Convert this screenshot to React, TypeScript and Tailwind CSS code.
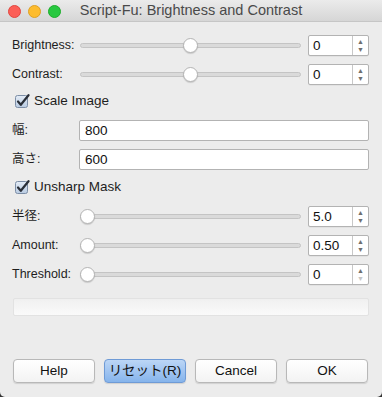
import type {ReactNode} from "react";

const font = {fontFamily: '"Liberation Sans", "Noto Sans CJK JP", Arial, sans-serif'};

function Slider({pos}: {pos: string}) {
  return (
    <div className="relative flex-1 h-[16px] flex items-center">
      <div className="w-full h-[5px] rounded-full bg-[#dadada] border border-[#c4c4c4]"/>
      <div className={`absolute top-[0.5px] ${pos} w-[15px] h-[15px] rounded-full bg-white border border-[#b4b4b4] shadow-[0_1px_1px_rgba(0,0,0,0.15)]`}/>
    </div>
  );
}

function Spin({value, downOff}: {value: string; downOff?: boolean}) {
  return (
    <div className="ml-[7px] w-[61px] h-[21px] flex bg-white border border-[#b3b3b3] rounded-[2px] shadow-[0_0.5px_0_rgba(0,0,0,0.08)]">
      <div className="flex-1 pl-[4px] text-[13.5px] leading-[19px] text-[#111]">{value}</div>
      <div className="w-[16px] border-l border-[#c8c8c8] flex flex-col items-center justify-center text-[7px] leading-[8px]">
        <span className="text-[#6e6e6e]">▲</span>
        <span className={downOff ? "text-[#c4c4c4]" : "text-[#6e6e6e]"}>▼</span>
      </div>
    </div>
  );
}

function SliderRow({label, pos, value, downOff, className}: {label: string; pos: string; value: string; downOff?: boolean; className: string}) {
  return (
    <div className={`flex items-center h-[21px] ${className}`}>
      <div className="w-[68px] text-[12.5px] text-[#1e1e1e]">{label}</div>
      <Slider pos={pos}/>
      <Spin value={value} downOff={downOff}/>
    </div>
  );
}

function Check({label, className}: {label: string; className: string}) {
  return (
    <div className={`flex items-center h-[16px] pl-[3px] ${className}`}>
      <svg width="15" height="15" viewBox="0 0 15 15">
        <defs>
          <linearGradient id="cb" x1="0" y1="0" x2="0" y2="1">
            <stop offset="0" stopColor="#e4ecf6"/>
            <stop offset="1" stopColor="#b9cbe2"/>
          </linearGradient>
        </defs>
        <rect x="0.5" y="1.5" width="12" height="12" rx="2" fill="url(#cb)" stroke="#7d8ea6"/>
        <path d="M3 7.5 L5.8 10.8 L13.5 1.2" fill="none" stroke="#2a2f38" strokeWidth="2.2" strokeLinecap="round" strokeLinejoin="round"/>
      </svg>
      <span className="ml-[4px] text-[13.5px] text-[#1e1e1e]">{label}</span>
    </div>
  );
}

function Field({label, value, className}: {label: string; value: string; className: string}) {
  return (
    <div className={`flex items-center ${className}`}>
      <div className="w-[67px] text-[12.5px] text-[#1e1e1e]">{label}</div>
      <div className="flex-1 h-[21px] bg-white border border-[#b3b3b3] rounded-[2px] pl-[5px] text-[13.5px] leading-[19px] text-[#111]">{value}</div>
    </div>
  );
}

function Btn({children, primary}: {children: ReactNode; primary?: boolean}) {
  return (
    <button className={`h-[24px] w-[82px] rounded-[4px] border text-[13.5px] text-[#111] shadow-[0_1px_1px_rgba(0,0,0,0.12)] ${primary ? "border-[#6f9bd6] bg-[linear-gradient(#bcd6f6,#86b4ec)]" : "border-[#b8b8b8] bg-[linear-gradient(#ffffff,#f3f3f3)]"}`}>
      {children}
    </button>
  );
}

export default function App() {
  return (
    <div className="w-[382px] h-[397px] bg-[#333]" style={font}>
      <div className="w-full h-full bg-[#ececec] rounded-b-[5px] flex flex-col overflow-hidden">
        <div className="relative h-[22px] shrink-0 flex items-center justify-center border-b border-[#c6c6c6] bg-[linear-gradient(#ebebeb,#d6d6d6)]">
          <div className="absolute left-[8px] top-[5px] flex gap-[7px]">
            <div className="w-[13px] h-[13px] rounded-full bg-[#fc5f57] border border-[#e2463f]"/>
            <div className="w-[13px] h-[13px] rounded-full bg-[#fdbc2e] border border-[#dfa023]"/>
            <div className="w-[13px] h-[13px] rounded-full bg-[#28c840] border border-[#1dad2b]"/>
          </div>
          <span className="text-[14.5px] text-[#4a4a4a]">Script-Fu: Brightness and Contrast</span>
        </div>

        <div className="flex flex-col pl-[12px] pr-[13px]">
          <SliderRow label="Brightness:" pos="left-[calc(50%-8px)]" value="0" className="mt-[13px]"/>
          <SliderRow label="Contrast:" pos="left-[calc(50%-8px)]" value="0" className="mt-[8px]"/>
          <Check label="Scale Image" className="mt-[8px]"/>
          <Field label="幅:" value="800" className="mt-[11px]"/>
          <Field label="高さ:" value="600" className="mt-[8px]"/>
          <Check label="Unsharp Mask" className="mt-[9px]"/>
          <SliderRow label="半径:" pos="left-[0px]" value="5.0" className="mt-[11px]"/>
          <SliderRow label="Amount:" pos="left-[0px]" value="0.50" className="mt-[8px]"/>
          <SliderRow label="Threshold:" pos="left-[0px]" value="0" downOff className="mt-[8px]"/>
          <div className="mt-[13px] ml-[1px] h-[18px] rounded-[2px] border border-[#e2e2e2] bg-[linear-gradient(#f0f0f0,#fafafa)]"/>
        </div>

        <div className="mt-auto mb-[14px] flex justify-between pl-[13px] pr-[14px]">
          <Btn>Help</Btn>
          <Btn primary>リセット(R)</Btn>
          <Btn>Cancel</Btn>
          <Btn>OK</Btn>
        </div>
      </div>
    </div>
  );
}
